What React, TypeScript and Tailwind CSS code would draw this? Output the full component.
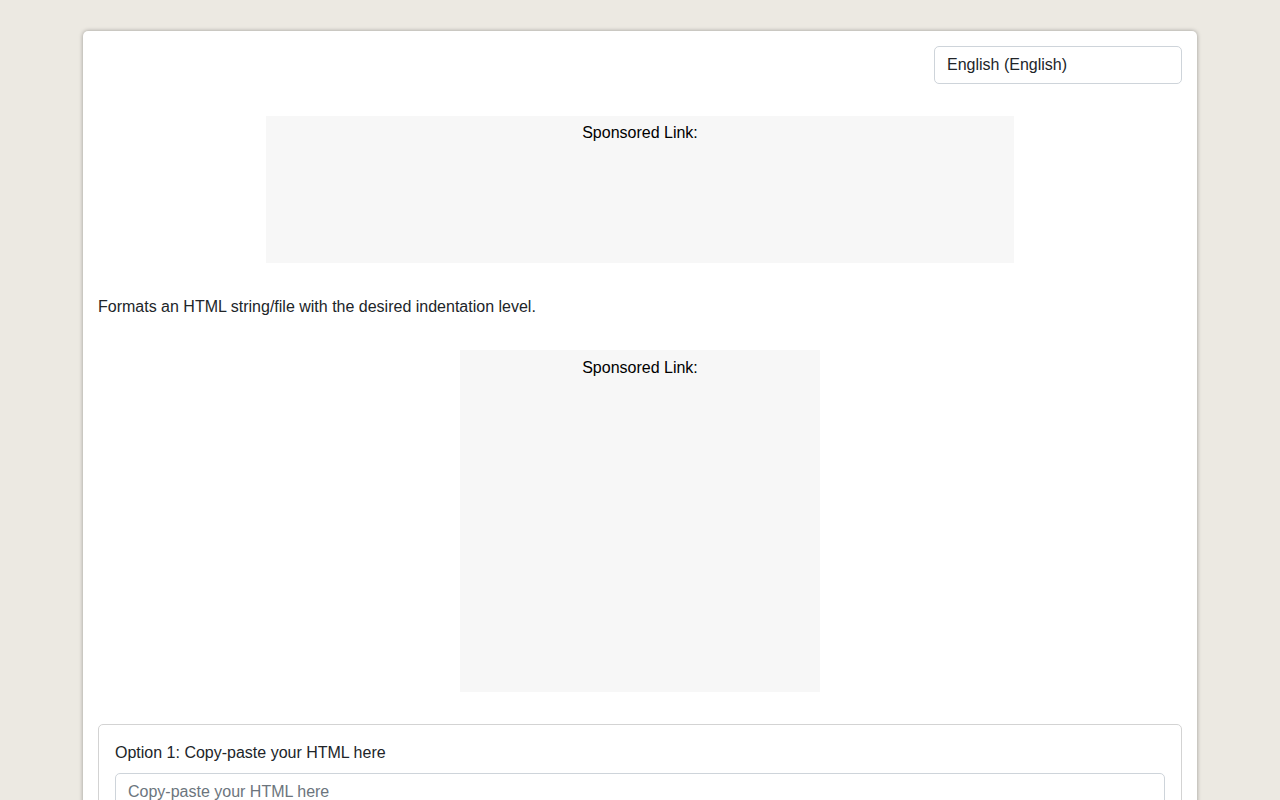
export default function App() {
  return (
    <div
      className="min-h-screen bg-[#ece9e2] pt-[31px] pb-10 text-[#212529]"
      style={{ fontFamily: '"Liberation Sans", Arial, sans-serif' }}
    >
      <main className="mx-auto w-[1114px] rounded-[5px] bg-white p-[15px] shadow-[0_0_4px_rgba(0,0,0,0.35)]">
        <div className="flex justify-end">
          <select className="h-[38px] w-[248px] appearance-none rounded-[5px] border border-[#ced4da] bg-white px-3 text-base text-[#212529]">
            <option>English (English)</option>
          </select>
        </div>

        {/* Sponsored banner */}
        <div className="mt-[32px] flex justify-center">
          <div className="h-[147px] w-[748px] bg-[#f7f7f7] pt-[7px] text-center text-base leading-5 text-black">
            Sponsored Link:
          </div>
        </div>

        <p className="mt-[32px] text-base leading-6">
          Formats an HTML string/file with the desired indentation level.
        </p>

        <div className="mt-[31px] flex justify-center">
          <div className="h-[342px] w-[360px] bg-[#f7f7f7] pt-[8px] text-center text-base leading-5 text-black">
            Sponsored Link:
          </div>
        </div>

        <fieldset className="mt-[32px] rounded-[5px] border border-[#d3d3d3] px-4 pt-[16px] pb-4">
          <label htmlFor="html-input" className="block text-base leading-6">
            Option 1: Copy-paste your HTML here
          </label>
          <textarea
            id="html-input"
            rows={8}
            placeholder="Copy-paste your HTML here"
            className="mt-[8px] block w-full resize-y rounded-[5px] border border-[#ced4da] px-3 py-[6px] text-base leading-6 placeholder:text-[#6c757d]"
          />
        </fieldset>
      </main>
    </div>
  );
}
